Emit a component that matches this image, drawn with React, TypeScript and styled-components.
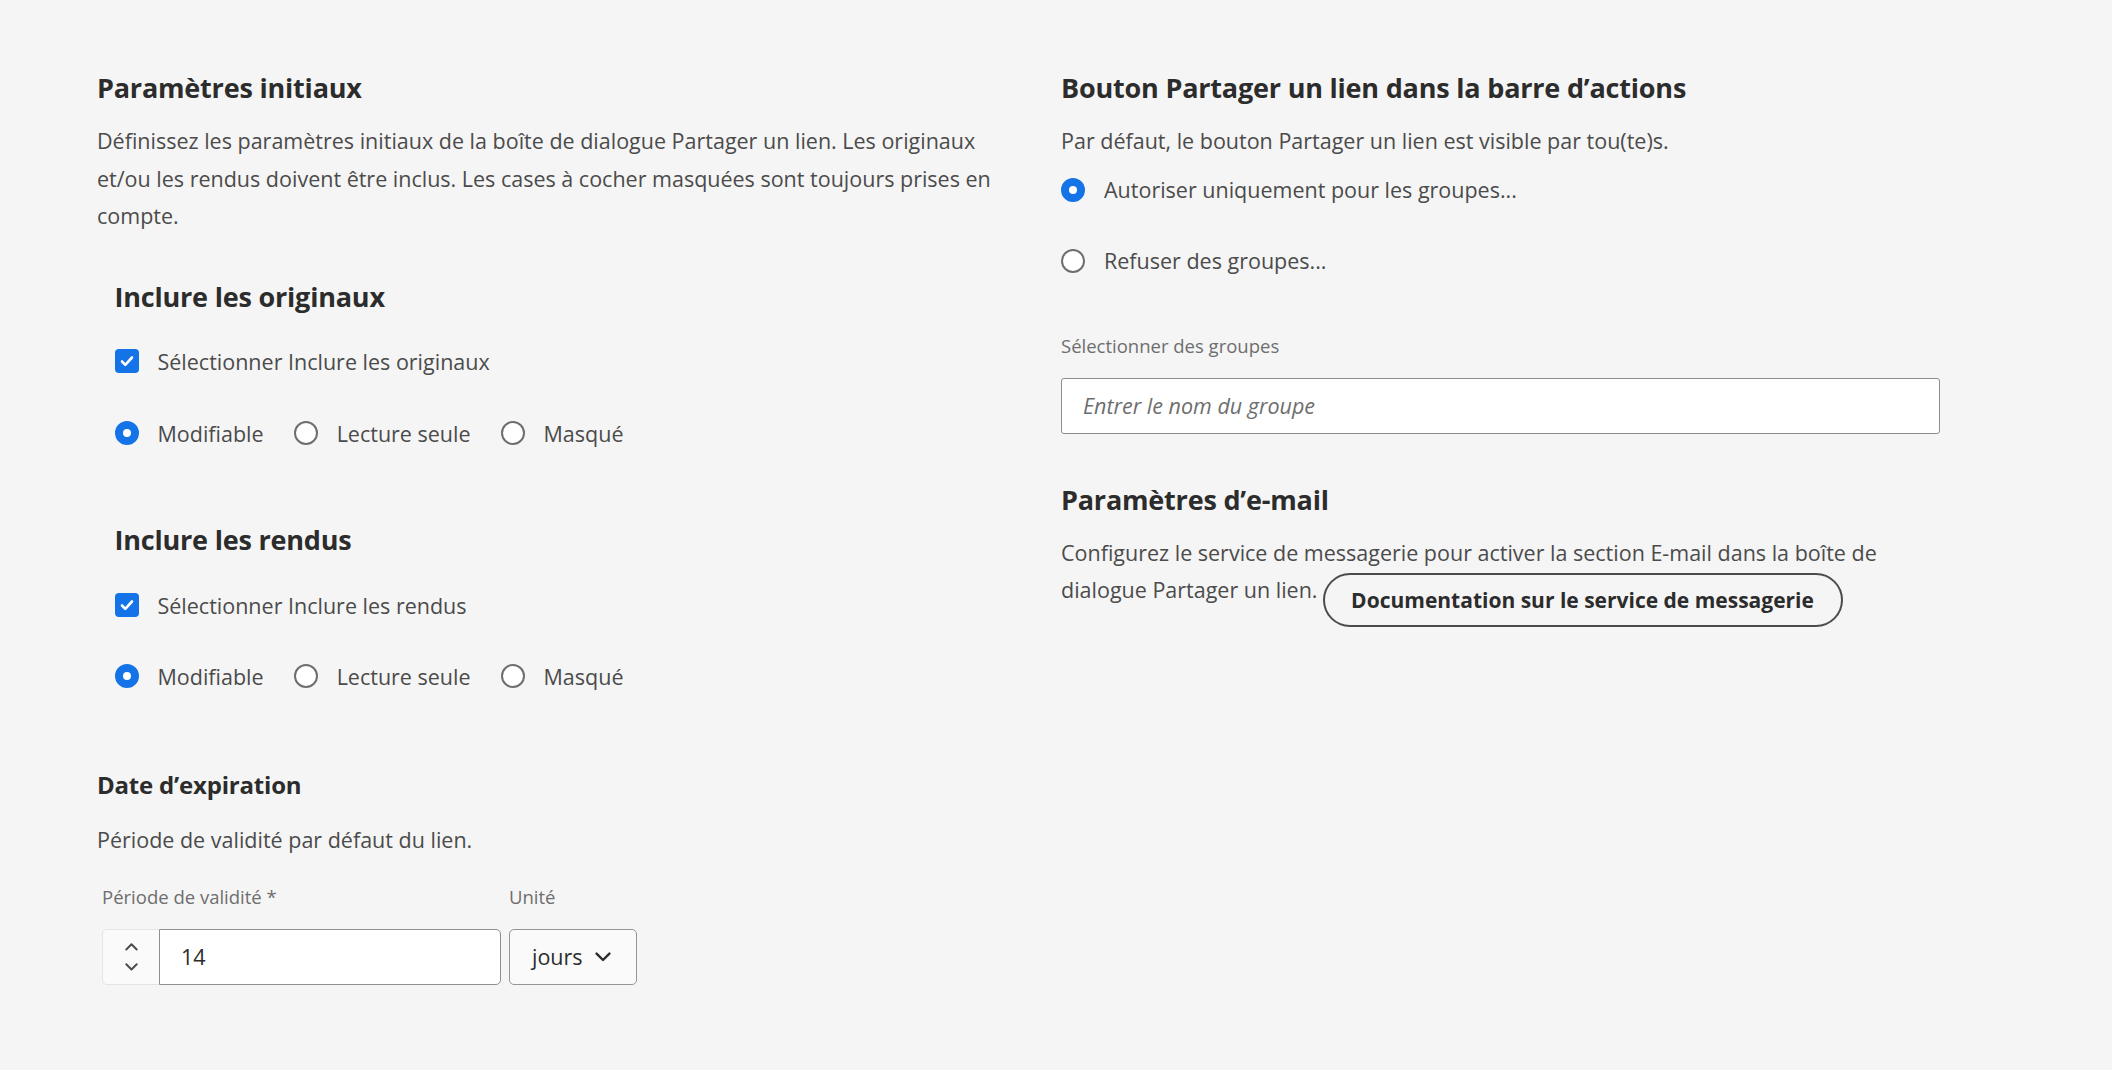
import React from "react";
import styled, { createGlobalStyle } from "styled-components";

const GlobalStyle = createGlobalStyle`
  html, body {
    margin: 0;
    padding: 0;
    background: #f5f5f5;
  }
  body {
    font-family: "Open Sans", "Noto Sans", sans-serif;
    color: #4b4b4b;
  }
  #root {
    min-height: 100vh;
  }
`;

const Page = styled.main`
  display: grid;
  grid-template-columns: 900px 880px;
  column-gap: 64px;
  padding: 72px 0 0 97px;
`;

const Column = styled.section`
  display: flex;
  flex-direction: column;
  align-items: flex-start;
`;

const Heading = styled.h2<{ $size?: "m" | "s" }>`
  margin: 0;
  font-weight: 700;
  color: #2c2c2c;
  font-size: ${(p) => (p.$size === "s" ? "24px" : "27px")};
  line-height: ${(p) => (p.$size === "s" ? "28px" : "31px")};
  letter-spacing: -0.2px;
`;

const Text = styled.p<{ $top?: number }>`
  margin: ${(p) => p.$top ?? 19}px 0 0;
  font-size: 21.5px;
  line-height: 37.7px;
  color: #4b4b4b;
`;

const SubSection = styled.div<{ $top: number }>`
  display: flex;
  flex-direction: column;
  align-items: flex-start;
  margin-top: ${(p) => p.$top}px;
  padding-left: 17.5px;
`;

const Row = styled.label<{ $top: number }>`
  display: flex;
  align-items: center;
  gap: 19px;
  height: 40px;
  margin-top: ${(p) => p.$top}px;
  font-size: 21.5px;
  color: #4b4b4b;
  cursor: pointer;
`;

const RadioGroup = styled.div<{ $top: number }>`
  display: flex;
  align-items: center;
  gap: 30px;
  margin-top: ${(p) => p.$top}px;
`;

const RadioItem = styled.label`
  display: flex;
  align-items: center;
  gap: 19px;
  height: 40px;
  font-size: 21.5px;
  color: #4b4b4b;
`;

const Box = styled.span`
  width: 24px;
  height: 24px;
  border-radius: 4px;
  background: #1473e6;
  display: flex;
  align-items: center;
  justify-content: center;
  flex-shrink: 0;
`;

const Circle = styled.span<{ $on?: boolean }>`
  box-sizing: border-box;
  width: 24px;
  height: 24px;
  border-radius: 50%;
  flex-shrink: 0;
  background: #fff;
  border: ${(p) => (p.$on ? "8px solid #1473e6" : "2.5px solid #6e6e6e")};
`;

const FieldLabel = styled.div<{ $width?: number }>`
  width: ${(p) => (p.$width ? `${p.$width}px` : "auto")};
  font-size: 18.5px;
  line-height: 24px;
  color: #6e6e6e;
`;

const LabelRow = styled.div`
  display: flex;
  margin-top: 26px;
  padding-left: 5px;
`;

const FieldRow = styled.div`
  display: flex;
  align-items: stretch;
  gap: 8px;
  margin-top: 20px;
  margin-left: 5px;
  height: 56px;
`;

const NumberField = styled.div`
  display: flex;
  width: 399px;
`;

const Stepper = styled.div`
  width: 57px;
  box-sizing: border-box;
  display: flex;
  flex-direction: column;
  align-items: center;
  justify-content: center;
  gap: 12px;
  background: #fafafa;
  border: 1.5px solid #e4e4e4;
  border-right: none;
  border-radius: 5px 0 0 5px;
`;

const NumberInput = styled.div`
  flex: 1;
  box-sizing: border-box;
  background: #fff;
  border: 1.5px solid #8e8e8e;
  border-radius: 0 5px 5px 0;
  display: flex;
  align-items: center;
  padding-left: 21px;
  font-size: 21.5px;
  color: #2c2c2c;
`;

const SelectBox = styled.div`
  width: 128px;
  box-sizing: border-box;
  background: #fafafa;
  border: 1.5px solid #959595;
  border-radius: 5px;
  display: flex;
  align-items: center;
  gap: 12px;
  padding-left: 22px;
  font-size: 21.5px;
  color: #2c2c2c;
`;

const TextInput = styled.div`
  box-sizing: border-box;
  width: 879px;
  height: 56px;
  margin-top: 20px;
  background: #fff;
  border: 1.5px solid #8e8e8e;
  border-radius: 3px;
  display: flex;
  align-items: center;
  padding-left: 21px;
  font-size: 21.5px;
  font-style: italic;
  color: #6e6e6e;
`;

const OutlineButton = styled.button`
  display: inline-flex;
  align-items: center;
  justify-content: center;
  box-sizing: border-box;
  height: 54px;
  width: 520px;
  margin-left: 5px;
  vertical-align: -10px;
  border: 2.5px solid #4b4b4b;
  border-radius: 27px;
  background: #f5f5f5;
  font-family: "Open Sans", "Noto Sans", sans-serif;
  font-weight: 700;
  font-size: 21px;
  color: #2c2c2c;
  cursor: pointer;
`;

const Stack = styled.div<{ $top: number }>`
  display: flex;
  flex-direction: column;
  align-items: flex-start;
  margin-top: ${(p) => p.$top}px;
`;

const Check = () => (
  <Box>
    <svg width="16" height="16" viewBox="0 0 16 16" fill="none">
      <path d="M3 8.5l3.3 3.3L13 4.5" stroke="#fff" strokeWidth="2.6" strokeLinecap="round" strokeLinejoin="round" />
    </svg>
  </Box>
);

const Chevron = ({ up, size = 14, color = "#4b4b4b" }: { up?: boolean; size?: number; color?: string }) => (
  <svg width={size} height={size * 0.6} viewBox="0 0 10 6" fill="none">
    <path
      d={up ? "M1 5l4-4 4 4" : "M1 1l4 4 4-4"}
      stroke={color}
      strokeWidth="1.5"
      strokeLinecap="round"
      strokeLinejoin="round"
    />
  </svg>
);

const RadioSet = ({ top }: { top: number }) => (
  <RadioGroup $top={top}>
    <RadioItem>
      <Circle $on />
      Modifiable
    </RadioItem>
    <RadioItem>
      <Circle />
      Lecture seule
    </RadioItem>
    <RadioItem>
      <Circle />
      Masqué
    </RadioItem>
  </RadioGroup>
);

export default function App() {
  return (
    <>
      <GlobalStyle />
      <Page>
        <Column>
          <Heading>Paramètres initiaux</Heading>
          <Text>
            Définissez les paramètres initiaux de la boîte de dialogue Partager un lien. Les originaux
            et/ou les rendus doivent être inclus. Les cases à cocher masquées sont toujours prises en
            compte.
          </Text>

          <SubSection $top={46}>
            <Heading>Inclure les originaux</Heading>
            <Row $top={29}>
              <Check />
              Sélectionner Inclure les originaux
            </Row>
            <RadioSet top={32} />
          </SubSection>

          <SubSection $top={71}>
            <Heading>Inclure les rendus</Heading>
            <Row $top={30}>
              <Check />
              Sélectionner Inclure les rendus
            </Row>
            <RadioSet top={31} />
          </SubSection>

          <Stack $top={75}>
            <Heading $size="s">Date d’expiration</Heading>
            <Text $top={22}>Période de validité par défaut du lien.</Text>
            <LabelRow>
              <FieldLabel $width={407}>Période de validité *</FieldLabel>
              <FieldLabel>Unité</FieldLabel>
            </LabelRow>
            <FieldRow>
              <NumberField>
                <Stepper>
                  <Chevron up size={13} />
                  <Chevron size={13} />
                </Stepper>
                <NumberInput>14</NumberInput>
              </NumberField>
              <SelectBox>
                jours
                <Chevron size={16} color="#2c2c2c" />
              </SelectBox>
            </FieldRow>
          </Stack>
        </Column>

        <Column>
          <Heading>Bouton Partager un lien dans la barre d’actions</Heading>
          <Text>Par défaut, le bouton Partager un lien est visible par tou(te)s.</Text>
          <Row $top={10}>
            <Circle $on />
            Autoriser uniquement pour les groupes...
          </Row>
          <Row $top={31}>
            <Circle />
            Refuser des groupes...
          </Row>

          <Stack $top={53}>
            <FieldLabel>Sélectionner des groupes</FieldLabel>
            <TextInput>Entrer le nom du groupe</TextInput>
          </Stack>

          <Stack $top={50}>
            <Heading>Paramètres d’e-mail</Heading>
            <Text>
              Configurez le service de messagerie pour activer la section E-mail dans la boîte de
              dialogue Partager un lien.
              <OutlineButton>Documentation sur le service de messagerie</OutlineButton>
            </Text>
          </Stack>
        </Column>
      </Page>
    </>
  );
}
